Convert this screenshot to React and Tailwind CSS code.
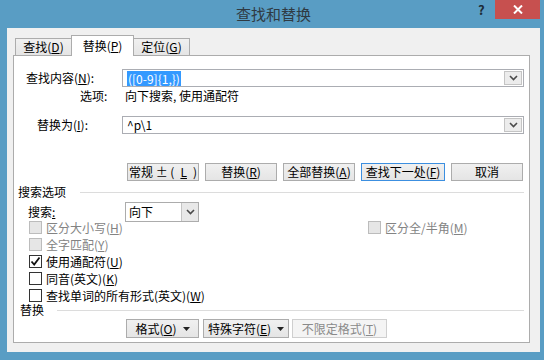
import React from 'react';

function Chevron() {
    return (
        <svg width="9" height="6" viewBox="0 0 9 6">
            <path d="M1 1 L4.5 4.5 L8 1" fill="none" stroke="#4a4a4a" strokeWidth="1.6" />
        </svg>
    );
}

function Combo({ children, width }) {
    return (
        <div className={`${width} h-[18px] border border-[#abadb3] bg-white flex items-stretch`}>
            <div className="flex-1 flex items-center pl-[4px]">{children}</div>
            <div className="w-[18px] my-[1px] mr-[1px] border border-[#c4c4c4] bg-[#ececec] flex items-center justify-center">
                <Chevron />
            </div>
        </div>
    );
}

function Btn({ children, width, focused, disabled, className = '' }) {
    let border = 'border-[#acacac]';
    if (focused) border = 'border-[#3c8fe0]';
    if (disabled) border = 'border-[#cfcfcf]';
    return (
        <div className={`${width} h-full border ${border} ${disabled ? 'bg-[#f4f4f4] text-[#8a8a8a]' : 'bg-linear-to-b from-[#f0f0f0] to-[#e5e5e5]'} flex items-center justify-center gap-[6px] leading-none ${className}`}>
            {children}
        </div>
    );
}

function Caret() {
    return (
        <svg width="7" height="4" viewBox="0 0 7 4">
            <path d="M0 0 H7 L3.5 4 Z" fill="#222" />
        </svg>
    );
}

function Check({ checked, disabled }) {
    return (
        <div className={`w-[13px] h-[13px] border shrink-0 flex items-center justify-center ${disabled ? 'border-[#bcbcbc] bg-[#e6e6e6]' : 'border-[#333] bg-white'}`}>
            {checked && (
                <svg width="11" height="11" viewBox="0 0 11 11">
                    <path d="M1.5 5.5 L4.2 8.5 L9.5 1.5" fill="none" stroke="#111" strokeWidth="1.8" />
                </svg>
            )}
        </div>
    );
}

function CheckRow({ label, checked, disabled }) {
    return (
        <div className="flex items-center gap-[4px]">
            <Check checked={checked} disabled={disabled} />
            <span className={disabled ? 'text-[#838383]' : ''}>{label}</span>
        </div>
    );
}

export default function App() {
    return (
        <div className="w-[544px] h-[360px] bg-[#599dc4] flex flex-col pl-[7px] pr-[4px] pb-[8px] font-['Noto_Sans_CJK_SC',sans-serif] text-[12px] text-black overflow-hidden">
            {/* title bar */}
            <div className="h-[28px] flex shrink-0">
                <div className="w-[62px]" />
                <div className="flex-1 text-center text-[15px] leading-[28px] text-[#2f3a42]">查找和替换</div>
                <div className="w-[62px] flex items-start">
                    <span className="w-[6px] mt-[3px] text-[13px] font-bold leading-[13px] text-[#1d2b36]">?</span>
                    <div className="ml-auto w-[45px] h-[19px] bg-[#c7504f] flex items-center justify-center">
                        <svg width="10" height="9" viewBox="0 0 10 9">
                            <path d="M1 0.5 L9 8.5 M9 0.5 L1 8.5" stroke="#fff" strokeWidth="2" />
                        </svg>
                    </div>
                </div>
            </div>

            {/* client area */}
            <div className="flex-1 bg-[#f0f0f0] flex flex-col pl-[6px] pr-[10px] pt-[7px] pb-[9px]">
                <div className="h-[20px] flex items-end pl-[2px] shrink-0">
                    <div className="w-[57px] h-[17px] border border-b-0 border-[#acacac] bg-linear-to-b from-[#f0f0f0] to-[#e5e5e5] flex items-center justify-center leading-none">
                        查找(<u>D</u>)
                    </div>
                    <div className="w-[63px] h-[21px] -mb-[1px] -ml-[1px] relative z-10 border border-b-0 border-[#acacac] bg-white flex items-center justify-center leading-none">
                        替换(<u>P</u>)
                    </div>
                    <div className="w-[57px] h-[17px] -ml-[1px] border border-b-0 border-[#acacac] bg-linear-to-b from-[#f0f0f0] to-[#e5e5e5] flex items-center justify-center leading-none">
                        定位(<u>G</u>)
                    </div>
                </div>

                <div className="flex-1 bg-white border border-[#acacac] flex flex-col">
                    <div className="mt-[13px] h-[18px] flex items-center">
                        <span className="w-[108px] pl-[12px]">查找内容(<u>N</u>):</span>
                        <Combo width="w-[402px]">
                            <span className="bg-[#3399ff] text-white leading-[15px] px-[1px]">([0-9]{'{'}1,{'}'})</span>
                        </Combo>
                    </div>
                    <div className="h-[17px] flex items-center">
                        <span className="w-[111px] pl-[66px]">选项:</span>
                        <span>向下搜索, 使用通配符</span>
                    </div>
                    <div className="mt-[12px] h-[18px] flex items-center">
                        <span className="w-[108px] pl-[23px]">替换为(<u>I</u>):</span>
                        <Combo width="w-[402px]">
                            <span>^p\1</span>
                        </Combo>
                    </div>

                    <div className="mt-[29px] h-[18px] flex pl-[113px] gap-[6px]">
                        <Btn width="w-[72px]">常规 ± (<u>L</u>)</Btn>
                        <Btn width="w-[72px]"><span>替换(<u>R</u>)</span></Btn>
                        <Btn width="w-[72px]"><span>全部替换(<u>A</u>)</span></Btn>
                        <Btn width="w-[84px]" focused><span>查找下一处(<u>F</u>)</span></Btn>
                        <Btn width="w-[72px]">取消</Btn>
                    </div>

                    <div className="mt-[4px] h-[14px] flex items-center pl-[4px]">
                        <span>搜索选项</span>
                        <div className="flex-1 h-px bg-[#dcdcdc] ml-[14px] mr-[5px]" />
                    </div>

                    <div className="mt-[3px] h-[17px] flex items-start">
                        <span className="w-[111px] pl-[14px] leading-[20px]">搜索<u>:</u></span>
                        <div className="w-[74px] h-[20px] border border-[#acacac] bg-white flex items-stretch relative z-10">
                            <div className="flex-1 flex items-center pl-[3px]">向下</div>
                            <div className="w-[17px] border-l border-[#c4c4c4] bg-[#e8e8e8] flex items-center justify-center">
                                <Chevron />
                            </div>
                        </div>
                    </div>

                    <div className="h-[17px] flex items-center">
                        <div className="w-[354px] pl-[15px]">
                            <CheckRow label={<>区分大小写(<u>H</u>)</>} disabled />
                        </div>
                        <CheckRow label={<>区分全/半角(<u>M</u>)</>} disabled />
                    </div>
                    <div className="h-[17px] flex items-center pl-[15px]">
                        <CheckRow label={<>全字匹配(<u>Y</u>)</>} disabled />
                    </div>
                    <div className="h-[17px] flex items-center pl-[15px]">
                        <CheckRow label={<>使用通配符(<u>U</u>)</>} checked />
                    </div>
                    <div className="h-[17px] flex items-center pl-[15px]">
                        <CheckRow label={<>同音(英文)(<u>K</u>)</>} />
                    </div>
                    <div className="h-[17px] flex items-center pl-[15px]">
                        <CheckRow label={<>查找单词的所有形式(英文)(<u>W</u>)</>} />
                    </div>

                    <div className="h-[12px] flex items-center pl-[6px]">
                        <span>替换</span>
                        <div className="flex-1 h-px bg-[#dcdcdc] ml-[13px] mr-[5px]" />
                    </div>

                    <div className="mt-[3px] h-[19px] flex pl-[112px]">
                        <Btn width="w-[73px]"><span>格式(<u>O</u>)</span><Caret /></Btn>
                        <Btn width="w-[86px]" className="ml-[4px]"><span>特殊字符(<u>E</u>)</span><Caret /></Btn>
                        <Btn width="w-[95px]" className="ml-[3px]" disabled><span>不限定格式(<u>T</u>)</span></Btn>
                    </div>
                </div>
            </div>
        </div>
    );
}
